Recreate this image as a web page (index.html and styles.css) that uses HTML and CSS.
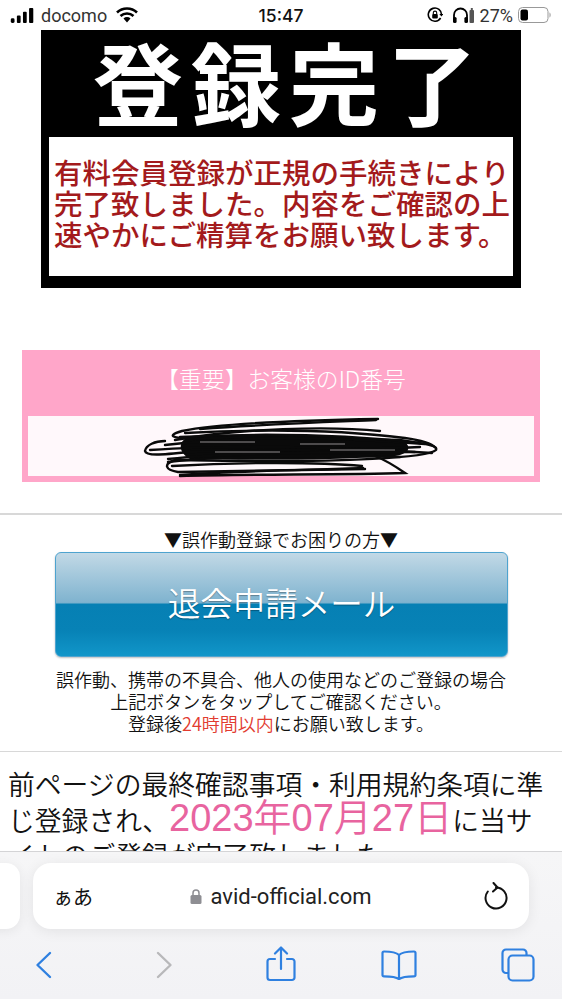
FILE: index.html
```html
<!DOCTYPE html>
<html lang="ja">
<head>
<meta charset="utf-8">
<title>登録完了</title>
<link rel="stylesheet" href="styles.css">
</head>
<body>
<div class="screen">
  <header class="status">
    <div class="status-left">
      <svg class="sig" viewBox="0 0 25 16"><rect x="0" y="11" width="4" height="5" rx="1.500"/><rect x="6.500" y="8" width="4" height="8" rx="1"/><rect x="13" y="4" width="4" height="12" rx="1"/><rect x="19.500" y="0" width="4.500" height="16" rx="1"/></svg>
      <span class="carrier">docomo</span>
      <svg class="wifi" viewBox="0 0 22 16"><path d="M1 5.500a14.500 14.500 0 0 1 20 0M4.500 9a9.500 9.500 0 0 1 13 0" fill="none" stroke="#000" stroke-width="2.600"/><path d="M7.500 11.500a5 5 0 0 1 7 0L11 15.500z"/></svg>
    </div>
    <div class="time">15:47</div>
    <div class="status-right">
      <svg class="rot" viewBox="0 0 16 16"><path d="M13.600 11A6.600 6.600 0 1 1 14.500 8" fill="none" stroke="#000" stroke-width="1.600"/><path d="M12.300 7h4.200l-2.100 2.600z"/><rect x="5.200" y="7" width="5.600" height="4.600" rx="1"/><path d="M6.300 7V5.800a1.700 1.700 0 0 1 3.400 0V7" fill="none" stroke="#000" stroke-width="1.100"/></svg>
      <svg class="phones" viewBox="0 0 22 16"><path d="M2 13V8a6.500 6.500 0 0 1 13 0v5" fill="none" stroke="#000" stroke-width="1.800"/><rect x="1" y="10" width="3.600" height="6" rx="1.500"/><rect x="12.400" y="10" width="3.600" height="6" rx="1.500"/><rect x="17.500" y="3" width="4.500" height="13" rx="1" fill="#555"/><rect x="18.800" y="1" width="2" height="2" fill="#555"/></svg>
      <span class="pct">27%</span>
      <svg class="batt" viewBox="0 0 34 16"><rect x="0.500" y="0.500" width="29.500" height="15" rx="4" fill="none" stroke="#999"/><rect x="2.500" y="2.500" width="7.500" height="11" rx="2" fill="#000"/><path d="M31.500 5.500c1.500.5 1.500 4.500 0 5z" fill="#999"/></svg>
    </div>
  </header>

  <main class="page">
    <section class="banner">
      <h1 class="banner-title">登録完了</h1>
      <p class="banner-box">有料会員登録が正規の手続きにより<br>完了致しました。内容をご確認の上<br>速やかにご精算をお願い致します。</p>
    </section>

    <section class="idbox">
      <h2 class="idbox-title">【重要】お客様のID番号</h2>
      <div class="idbox-value">
        <svg class="scribble" viewBox="28 416 506 62">
          <path d="M188 437C240 433 340 433 405 442C412 448 408 454 395 456C320 461 250 460 190 459C178 452 178 442 188 437z" fill="#0a0a0a"/>
          <g fill="none" stroke="#0a0a0a" stroke-width="2.400" stroke-linecap="round">
            <path d="M378 419C320 420 220 423 182 431C165 436 165 441 240 437L400 440C425 444 438 445 436 450C428 458 340 462 240 461L175 460C163 464 165 470 178 472L365 469"/>
            <path d="M180 476C250 474 340 475 405 473C395 466 385 460 375 456M180 475C250 470 320 470 363 468"/>
            <path d="M165 441C155 441 146 445 145 451C146 456 160 455 190 452C260 450 350 450 420 447M175 440C240 428 330 426 380 431"/>
            <path d="M165 445C250 435 350 438 425 444M150 450C220 445 330 446 432 453M200 429C270 424 330 422 376 420"/>
            <path d="M168 462C230 455 330 455 400 457M172 466C240 462 320 462 362 466M168 459C240 452 340 452 415 452"/>
            <path d="M185 433C260 429 340 430 405 438C420 440 432 444 436 448M180 437C260 433 340 434 420 443"/>
          </g>
          <g fill="none" stroke="#fff8fb" stroke-width="1" opacity=".55">
            <path d="M200 442H255M300 444H345M215 452H280M330 450H395"/>
          </g>
        </svg>
      </div>
    </section>

    <hr class="rule rule-first">

    <section class="cancel">
      <p class="cancel-head">▼誤作動登録でお困りの方▼</p>
      <a class="cancel-btn">退会申請メール</a>
      <p class="cancel-note">誤作動、携帯の不具合、他人の使用などのご登録の場合<br>上記ボタンをタップしてご確認ください。<br>登録後<span class="red">24時間以内</span>にお願い致します。</p>
    </section>

    <hr class="rule rule-second">

    <p class="body-text">前ページの最終確認事項・利用規約条項に準じ登録され、<span class="date">2023年07月27日</span>に当サイトのご登録が完了致しました。</p>
  </main>

  <footer class="safari">
    <div class="urlrow">
      <div class="stub"></div>
      <div class="urlbar">
        <span class="aa">ぁあ</span>
        <span class="host">
          <svg class="lock" viewBox="0 0 12 15"><rect x="0.500" y="6" width="11" height="9" rx="1.500" fill="#8e8e93"/><path d="M3 6V4a3 3 0 0 1 6 0v2" fill="none" stroke="#8e8e93" stroke-width="1.500"/></svg>
          <span>avid-official.com</span>
        </span>
        <svg class="reload" viewBox="0 0 24 28"><path d="M12 5.500A10.500 10.500 0 1 1 3.800 9.500" fill="none" stroke="#111" stroke-width="2" stroke-linecap="round"/><path d="M9.500 1l4 4.500-4.500 4" fill="none" stroke="#111" stroke-width="2" stroke-linecap="round" stroke-linejoin="round"/></svg>
      </div>
    </div>
    <nav class="tools">
      <svg class="tool t-back" viewBox="0 0 17 28"><path d="M15 2L2.500 14 15 26" fill="none" stroke="#2f80e0" stroke-width="2.400" stroke-linecap="round" stroke-linejoin="round"/></svg>
      <svg class="tool t-fwd" viewBox="0 0 17 28"><path d="M2 2l12.500 12L2 26" fill="none" stroke="#b8b8ba" stroke-width="2.400" stroke-linecap="round" stroke-linejoin="round"/></svg>
      <svg class="tool t-share" viewBox="0 0 30 36"><path d="M9 13H4a2.500 2.500 0 0 0-2.500 2.500v16A2.500 2.500 0 0 0 4 34h22a2.500 2.500 0 0 0 2.500-2.500v-16A2.500 2.500 0 0 0 26 13h-5M15 23V2M9 7.500L15 1.500l6 6" fill="none" stroke="#2f80e0" stroke-width="2.200" stroke-linecap="round" stroke-linejoin="round"/></svg>
      <svg class="tool t-book" viewBox="0 0 36 30"><path d="M18 5C15 2 10 1.500 3 1.500 2 1.500 1.500 2 1.500 3v22c0 1 .5 1.300 1.500 1.300 7 0 12 .5 15 2.700 3-2.200 8-2.700 15-2.700 1 0 1.500-.3 1.500-1.300V3c0-1-.5-1.500-1.500-1.500C26 1.500 21 2 18 5zM18 5v24" fill="none" stroke="#2f80e0" stroke-width="2.200" stroke-linejoin="round"/></svg>
      <svg class="tool t-tabs" viewBox="0 0 34 34"><path d="M7 25H5a3.500 3.500 0 0 1-3.500-3.500V5A3.500 3.500 0 0 1 5 1.500h17A3.500 3.500 0 0 1 25.500 5v2" fill="none" stroke="#2f80e0" stroke-width="2.200"/><rect x="7.500" y="7.500" width="25" height="25" rx="4" fill="none" stroke="#2f80e0" stroke-width="2.200"/></svg>
    </nav>
  </footer>
</div>
</body>
</html>
```
FILE: styles.css
```css
* { box-sizing: border-box; }
html, body { margin: 0; padding: 0; }
body {
  width: 562px;
  height: 999px;
  overflow: hidden;
  background: #fff;
  color: #111;
  font-family: "Liberation Sans", "Noto Sans CJK JP", sans-serif;
}
.screen { display: flex; flex-direction: column; height: 999px; }

/* status bar */
.status {
  flex: none;
  height: 30px;
  display: grid;
  grid-template-columns: 1fr auto 1fr;
  align-items: center;
  padding: 0 10px;
  font-size: 17px;
}
.status-left, .status-right { display: flex; align-items: center; }
.status-right { justify-content: flex-end; }
.sig { width: 25px; height: 15px; margin-right: 6px; }
.carrier { font-family: Roboto, sans-serif; color: #333; font-size: 18px; width: 69px; }
.wifi { width: 22px; height: 16px; margin-left: 6px; }
.time { font-family: Inter, sans-serif; font-weight: 500; font-size: 17.500px; }
.rot { width: 16px; height: 16px; margin-right: 9px; }
.phones { width: 22px; height: 16px; margin-right: 6px; }
.pct { font-family: Roboto, sans-serif; font-size: 18px; color: #333; margin-right: 5px; }
.batt { width: 34px; height: 16px; }

/* page */
.page { flex: 1; min-height: 0; overflow: hidden; }

.banner {
  width: 480px;
  height: 258px;
  margin-left: 41px;
  background: #000;
  padding: 0 8px;
}
.banner-title {
  margin: 0;
  height: 107px;
  padding: 0 0 0 16px;
  font-family: "Noto Sans CJK JP", sans-serif;
  font-weight: 700;
  font-size: 90px;
  line-height: 100px;
  letter-spacing: 8px;
  text-align: center;
  color: #fff;
  white-space: nowrap;
}
.banner-box {
  margin: 0;
  height: 139px;
  padding: 19px 0 0 5px;
  background: #fff;
  color: #a31a1c;
  font-family: "Noto Sans CJK JP", sans-serif;
  font-weight: 500;
  font-size: 28.500px;
  line-height: 31px;
  white-space: nowrap;
}

.idbox {
  width: 518px;
  height: 132px;
  margin: 62px 0 0 22px;
  background: #ffa6c9;
  padding: 0 6px;
}
.idbox-title {
  margin: 0;
  height: 66px;
  font-family: "Noto Sans CJK JP", sans-serif;
  font-weight: 300;
  font-size: 22.800px;
  line-height: 58px;
  text-align: center;
  color: #fff;
}
.idbox-value { height: 60px; background: #fff8fb; }
.scribble { display: block; width: 506px; height: 62px; overflow: visible; }

.rule { border: 0; height: 1.500px; background: #d8d8d8; margin: 0; }
.rule-first { margin-top: 31px; }
.rule-second { margin-top: 17px; }

.cancel { text-align: center; font-family: "Noto Sans CJK JP", sans-serif; font-weight: 300; }
.cancel-head { margin: 0; height: 36px; padding-top: 12px; font-size: 18px; line-height: 24px; color: #111; font-weight: 350; }
.cancel-btn {
  display: block;
  width: 453px;
  height: 105px;
  margin: 1px 0 0 55px;
  border: 1px solid #4ea3cf;
  border-radius: 6px;
  background: linear-gradient(#c2d9e6 0%, #7fb3cf 48%, #0680b4 50%, #0782b6 75%, #1196c9 100%);
  box-shadow: 0 1px 2px rgba(0,0,0,.25);
  color: #fff;
  font-weight: 350;
  font-size: 32.500px;
  line-height: 97px;
  text-shadow: 0 1px 1px rgba(0,0,0,.3);
}
.cancel-note { margin: 11px 0 0; font-size: 18px; line-height: 22px; color: #111; white-space: nowrap; font-weight: 350; }
.red { color: #e23b30; }

.body-text {
  margin: 14px 0 0;
  padding: 0 8px;
  font-family: "Noto Sans CJK JP", sans-serif;
  font-weight: 350;
  font-size: 26.800px;
  line-height: 35px;
  color: #111;
}
.date { font-size: 38px; color: #e8649f; font-family: "Liberation Sans", "Noto Sans CJK JP", sans-serif; }

/* Safari chrome */
.safari {
  flex: none;
  height: 148px;
  background: linear-gradient(#f6f6f7, #f2f2f5);
  border-top: 1px solid #d4d4d6;
}
.urlrow { display: flex; gap: 13px; height: 66px; margin: 11px 33px 0 -40px; }
.stub { width: 60px; background: #fff; border-radius: 14px; box-shadow: 0 2px 12px rgba(0,0,0,.07); }
.urlbar {
  flex: 1;
  display: grid;
  grid-template-columns: 1fr auto 1fr;
  align-items: center;
  padding: 0 21px 0 20px;
  background: #fff;
  border-radius: 18px;
  box-shadow: 0 2px 14px rgba(0,0,0,.08);
}
.aa { font-family: "Noto Sans CJK JP", sans-serif; font-size: 20px; color: #111; }
.host { display: flex; align-items: center; gap: 9px; font-family: Roboto, sans-serif; font-size: 22px; color: #222; }
.lock { width: 12px; height: 15px; }
.reload { width: 24px; height: 28px; justify-self: end; }

.tools { display: flex; align-items: center; height: 71px; }
.tool { flex: none; }
.t-back { width: 17px; height: 28px; margin-left: 35px; }
.t-fwd { width: 17px; height: 28px; margin-left: 104px; }
.t-share { width: 30px; height: 36px; margin-left: 93px; margin-top: -2px; }
.t-book { width: 36px; height: 30px; margin-left: 85px; }
.t-tabs { width: 34px; height: 34px; margin-left: 84px; }
```
